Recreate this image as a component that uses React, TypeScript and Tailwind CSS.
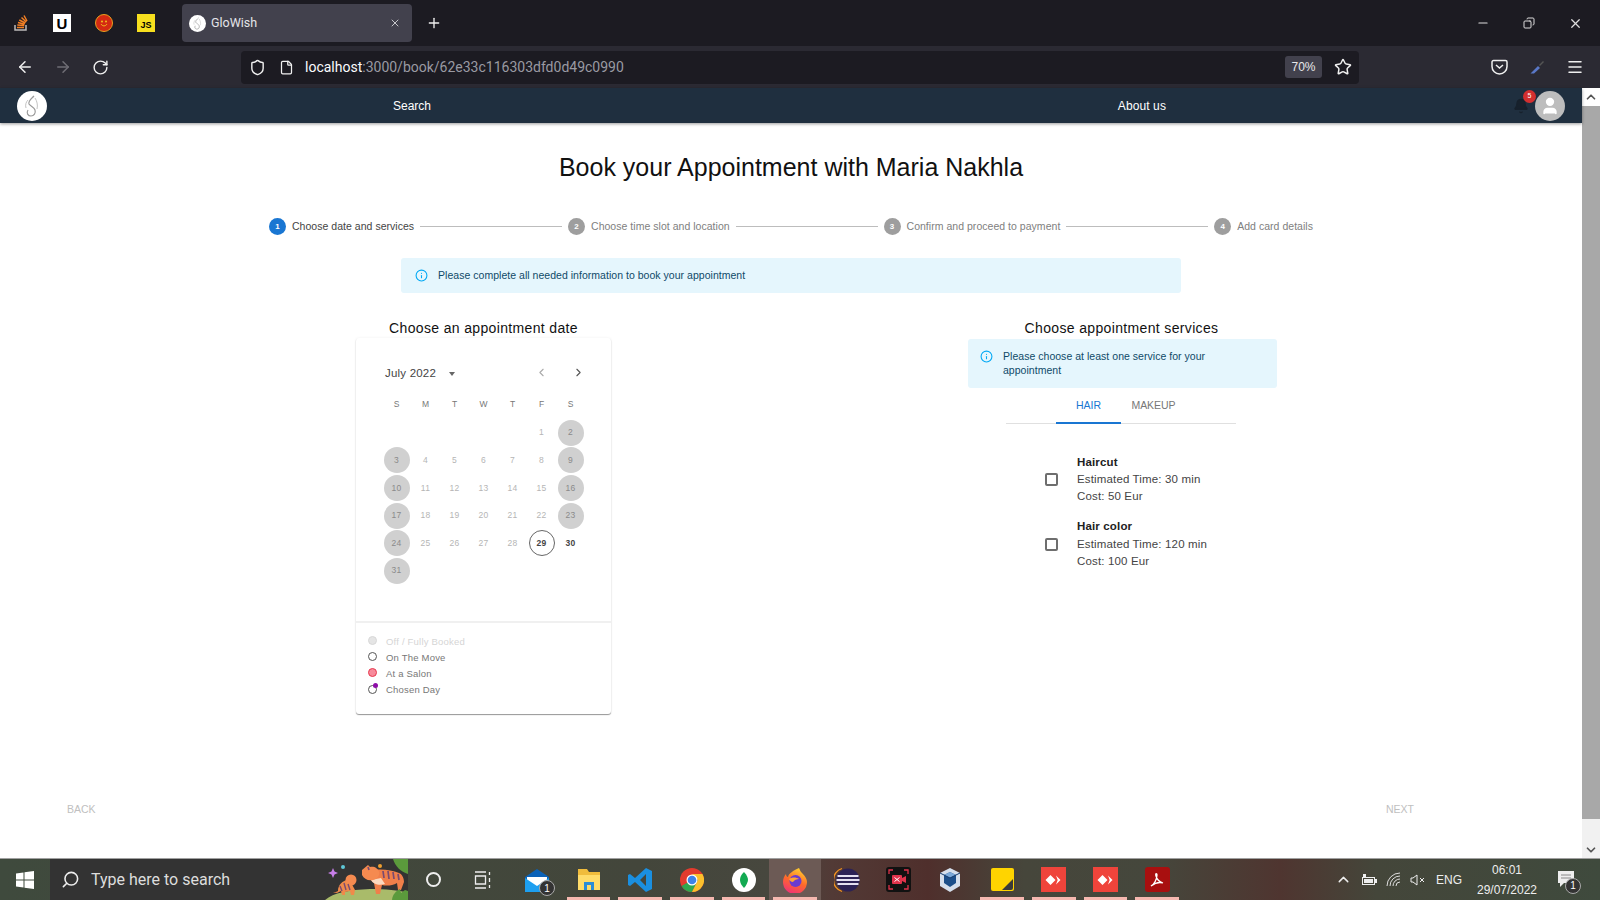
import React from "react";
import { ArrowLeft, ArrowRight, RotateCw, Shield, File, Star, Menu, Plus, X, Minus, Copy, ChevronUp, ChevronDown, ChevronLeft, ChevronRight, Info, Bell, User, Search as SearchIcon } from "lucide-react";

const FONT = "font-['Liberation_Sans',Arial,sans-serif]";

function Logo({ size }: { size: number }) {
  return (
    <svg width={size} height={size} viewBox="0 0 30 30">
      <circle cx="15" cy="15" r="15" fill="#fff" />
      <path d="M17 5c-3 3-6 5-5 8 1 2 5 3 6 6 1 3-1 6-4 6-3 0-5-3-3-6" fill="none" stroke="#9a9a9a" strokeWidth="1.2" />
      <path d="M18 7c2 3 3 7 2 11M11 9c-2 2-3 5-2 8" fill="none" stroke="#bbb" strokeWidth="0.9" />
    </svg>
  );
}

function Step({ n, label, active }: { n: number; label: string; active?: boolean }) {
  return (
    <div className="flex items-center gap-[6px] shrink-0">
      <div className={`w-[17px] h-[17px] rounded-full flex items-center justify-center text-white text-[8px] font-bold ${active ? "bg-[#1976d2]" : "bg-[#9e9e9e]"}`}>{n}</div>
      <span className={`text-[10.5px] tracking-[0.03px] ${active ? "text-[#444]" : "text-[#808080]"}`}>{label}</span>
    </div>
  );
}

const Line = () => <div className="flex-1 h-px bg-[#bdbdbd] mx-[6px]" />;

const weeks: (number | null)[][] = [
  [null, null, null, null, null, 1, 2],
  [3, 4, 5, 6, 7, 8, 9],
  [10, 11, 12, 13, 14, 15, 16],
  [17, 18, 19, 20, 21, 22, 23],
  [24, 25, 26, 27, 28, 29, 30],
  [31, null, null, null, null, null, null],
];

function Day({ d, col }: { d: number | null; col: number }) {
  if (d === null) return <div className="w-[26px] h-[26px]" />;
  const off = col === 0 || col === 6;
  const today = d === 29;
  const open = d === 30;
  let cls = "text-[#b5b5b5]";
  if (off && !open) cls = "bg-[#d0d0d0] text-[#8a8a8a]";
  if (today) cls = "border border-[#666] text-[#444] font-bold";
  if (open) cls = "text-[#444] font-bold";
  return <div className={`w-[26px] h-[26px] rounded-full flex items-center justify-center text-[8.5px] tracking-[0.3px] ${cls}`}>{d}</div>;
}

function Legend({ label, dot, muted }: { label: string; dot: React.ReactNode; muted?: boolean }) {
  return (
    <div className="flex items-center gap-[8px] h-[16px]">
      <div className="w-[10px] h-[10px] relative -mt-[2px]">{dot}</div>
      <span className={`text-[9.5px] tracking-[0.2px] ${muted ? "text-[#d5d5d5]" : "text-[#777]"}`}>{label}</span>
    </div>
  );
}

function Service({ name, time, cost }: { name: string; time: string; cost: string }) {
  return (
    <div className="flex items-center">
      <div className="w-[13px] h-[13px] border-2 border-[#6e6e6e] rounded-[2px] mr-[19px] shrink-0" />
      <div className="text-[11.5px] leading-[17.2px] text-[#444] tracking-[0.15px]">
        <div className="font-bold text-[#222]">{name}</div>
        <div>{time}</div>
        <div>{cost}</div>
      </div>
    </div>
  );
}

function Tile({ bg, children }: { bg: string; children?: React.ReactNode }) {
  return <div className={`w-[25px] h-[25px] flex items-center justify-center ${bg}`}>{children}</div>;
}

function TaskIcon({ children, active, running }: { children: React.ReactNode; active?: boolean; running?: boolean }) {
  return (
    <div className={`relative w-[51.7px] h-full flex items-center justify-center ${active ? "bg-[#6c5a55]" : ""}`}>
      {children}
      {running && <div className="absolute bottom-0 left-[4px] right-[4px] h-[3px] bg-[#f5b8b0]" />}
    </div>
  );
}

function Count({ className }: { className: string }) {
  return <div className={`absolute w-[16px] h-[16px] rounded-full bg-[#333] border border-[#aaa] text-white text-[10px] flex items-center justify-center ${className}`}>1</div>;
}

const AnyDesk = () => (
  <Tile bg="bg-[#ef443b]">
    <svg width="17" height="12" viewBox="0 0 17 12" fill="#fff"><path d="M5.500 1l5 5-5 5-5-5zM11 1.500l4.500 4.500L11 10.500l1.700-4.500z" /></svg>
  </Tile>
);

export default function App() {
  return (
    <div className={`${FONT} w-[1600px] h-[900px] overflow-hidden flex flex-col bg-white`}>
      {/* tab strip */}
      <div className="h-[46px] bg-[#1c1b22] flex items-center shrink-0">
        <div className="flex items-center w-[182px] pl-[13px] gap-[24px]">
          <svg width="16" height="18" viewBox="0 0 16 18">
            <path d="M2 11v5h11v-5" fill="none" stroke="#bcbbbb" strokeWidth="1.5" />
            <path d="M4 13.5h7M4.3 11l7 .6M5 8.500l6.600 1.800M6.300 6l6 3M8.500 3.500l4.800 4.500M11 1.500l3 5.500" stroke="#f48024" strokeWidth="1.5" />
          </svg>
          <div className="w-[18px] h-[18px] bg-white flex items-center justify-center">
            <span className="text-black font-bold text-[15px] leading-none">U</span>
          </div>
          <div className="w-[18px] h-[18px] rounded-full bg-[#d42a12] border border-[#e8a020] flex items-center justify-center">
            <svg width="12" height="12" viewBox="0 0 12 12"><circle cx="4" cy="4.500" r="1" fill="#f0c020" /><circle cx="8" cy="4.500" r="1" fill="#f0c020" /><path d="M3 7c1.500 2.500 4.500 2.500 6 0" stroke="#f0c020" fill="none" /></svg>
          </div>
          <div className="w-[18px] h-[18px] bg-[#f7df1e] flex items-end justify-center text-[9px] font-bold text-black leading-[13px]">JS</div>
        </div>
        <div className="w-[230px] h-[38px] bg-[#42414d] rounded-[4px] flex items-center pl-[7px] pr-[11px] gap-[5px]">
          <Logo size={17} />
          <span className="text-[12.5px] text-[#e4e4e8] flex-1 font-['Roboto',sans-serif] mt-[1px]">GloWish</span>
          <X size={12} className="text-[#c8c8cc]" />
        </div>
        <Plus size={16} className="text-[#f0f0f0] ml-[14px]" />
        <div className="flex-1" />
        <div className="flex items-center gap-[33px] pr-[17px]">
          <Minus size={14} className="text-[#ddd] -ml-[2px]" />
          <Copy size={12} className="text-[#ddd] -scale-x-100" />
          <X size={15} className="text-[#ddd]" />
        </div>
      </div>
      {/* toolbar */}
      <div className="h-[42px] bg-[#2b2a33] flex items-center shrink-0">
        <div className="flex items-center w-[241px] pl-[16px] gap-[20px] shrink-0">
          <ArrowLeft size={18} className="text-[#f0f0f0]" />
          <ArrowRight size={18} className="text-[#6f6e75]" />
          <RotateCw size={17} className="text-[#f0f0f0]" />
        </div>
        <div className="w-[1118px] h-[33px] bg-[#1c1b22] rounded-[4px] flex items-center pl-[8px] pr-[5px]">
          <Shield size={17} className="text-[#f0f0f0]" />
          <File size={15} className="text-[#f0f0f0] ml-[13px]" />
          <span className="ml-[11px] mt-[1px] text-[14px] font-['Roboto',sans-serif] text-[#fbfbfe]">localhost<span className="text-[#9a9aa2]">:3000/book/62e33c116303dfd0d49c0990</span></span>
          <div className="flex-1" />
          <div className="w-[37px] h-[22px] bg-[#42414d] rounded-[3px] text-[12px] text-[#e8e8ea] flex items-center justify-center">70%</div>
          <Star size={18} className="text-[#f0f0f0] ml-[12px]" />
          <div className="w-[2px]" />
        </div>
        <div className="flex-1 flex items-center justify-end gap-[21px] pr-[16px]">
          <svg width="17" height="16" viewBox="0 0 17 16"><path d="M2.500 1.500h12a1.500 1.500 0 0 1 1.500 1.500v4.500a7.500 7.500 0 0 1-15 0V3a1.500 1.500 0 0 1 1.500-1.500z" fill="none" stroke="#f0f0f0" strokeWidth="1.500" /><path d="M5 6l3.500 3L12 6" fill="none" stroke="#f0f0f0" strokeWidth="1.500" /></svg>
          <svg width="16" height="16" viewBox="0 0 16 16"><path d="M1.500 14.500L9 7l2 2-6 5.500z" fill="#5a78c8" /><path d="M10 6l4-4 1 1-4 4z" fill="#555" /></svg>
          <Menu size={18} className="text-[#f0f0f0]" />
        </div>
      </div>
      {/* page */}
      <div className="flex-1 flex min-h-0">
        <div className="flex-1 flex flex-col min-w-0">
          <header className="h-[35px] bg-[#1f2f3f] shadow-[0_1px_3px_rgba(0,0,0,0.4)] flex items-center relative shrink-0">
            <div className="pl-[17px]"><Logo size={30} /></div>
            <div className="w-[384px] text-right text-white text-[12px]">Search</div>
            <div className="w-[735px] text-right text-white text-[12px] tracking-[0.1px]">About us</div>
            <div className="flex-1" />
            <div className="relative flex items-center pr-[17px]">
              <Bell size={16} className="text-[#17212c] mr-[6px]" fill="#17212c" />
              <div className="absolute left-[10px] top-[-1px] w-[13px] h-[13px] rounded-full bg-[#d32f2f] text-white text-[7px] flex items-center justify-center">5</div>
              <div className="w-[30px] h-[30px] rounded-full bg-[#bdbdbd] flex items-center justify-center">
                <User size={20} className="text-white" fill="#fff" />
              </div>
            </div>
          </header>
          <main className="flex-1 flex flex-col min-h-0">
            <h1 className="text-center text-[25px] leading-[30px] text-[#111] mt-[29px]">Book your Appointment with Maria Nakhla</h1>
            <div className="flex items-center ml-[269px] mr-[269px] mt-[36px]">
              <Step n={1} label="Choose date and services" active />
              <Line />
              <Step n={2} label="Choose time slot and location" />
              <Line />
              <Step n={3} label="Confirm and proceed to payment" />
              <Line />
              <Step n={4} label="Add card details" />
            </div>
            <div className="ml-[401px] w-[780px] h-[35px] mt-[23px] bg-[#e5f6fd] rounded-[3px] flex items-center pl-[14px] gap-[10px] shrink-0">
              <Info size={13} className="text-[#03a9f4]" />
              <span className="text-[10.5px] text-[#0f4a68] tracking-[0.03px]">Please complete all needed information to book your appointment</span>
            </div>
            <div className="flex items-start ml-[356px] mt-[26px]">
              <section className="w-[255px]">
                <h2 className="text-center text-[14px] leading-[18px] text-[#111] tracking-[0.35px] mb-[1px]">Choose an appointment date</h2>
                <div className="rounded-[3px] shadow-[0_1px_1px_rgba(0,0,0,0.4),0_0_3px_rgba(0,0,0,0.06)] bg-white">
                  <div className="h-[285px] border-b-2 border-[#f0f0f0] pt-[27px]">
                    <div className="flex items-center pl-[29px] pr-[26px] h-[18px]">
                      <span className="text-[11.5px] text-[#444] tracking-[0.2px]">July 2022</span>
                      <div className="w-0 h-0 border-l-[3.5px] border-r-[3.5px] border-t-[4px] border-l-transparent border-r-transparent border-t-[#666] ml-[13px]" />
                      <div className="flex-1" />
                      <ChevronLeft size={13} className="text-[#aaa] mb-[4px]" />
                      <ChevronRight size={13} className="text-[#555] ml-[24px] mb-[4px]" />
                    </div>
                    <div className="grid grid-cols-[repeat(7,29px)] pl-[26px] mt-[13px] justify-items-center">
                      {["S", "M", "T", "W", "T", "F", "S"].map((s, i) => (
                        <div key={i} className="text-[8.5px] text-[#777] h-[16px] leading-[16px]">{s}</div>
                      ))}
                    </div>
                    <div className="grid grid-cols-[repeat(7,29px)] auto-rows-[27.6px] pl-[26px] mt-[7px] justify-items-center items-center">
                      {weeks.flatMap((w, r) => w.map((d, c) => <Day key={`${r}-${c}`} d={d} col={c} />))}
                    </div>
                  </div>
                  <div className="pl-[12px] pt-[11px] h-[91px]">
                    <Legend muted label="Off / Fully Booked" dot={<div className="w-[9px] h-[9px] rounded-full bg-[#e5e5e5] border border-[#d8d8d8]" />} />
                    <Legend label="On The Move" dot={<div className="w-[9px] h-[9px] rounded-full border border-[#555]" />} />
                    <Legend label="At a Salon" dot={<div className="w-[9px] h-[9px] rounded-full bg-[#f78b9b] border border-[#e8384f]" />} />
                    <Legend label="Chosen Day" dot={<><div className="w-[9px] h-[9px] rounded-full border border-[#555] mt-[1px]" /><div className="absolute left-[5px] -top-[1px] w-[5px] h-[5px] rounded-full bg-[#8e0ea8]" /></>} />
                  </div>
                </div>
              </section>
              <section className="w-[309px] ml-[357px]">
                <h2 className="text-center text-[14px] leading-[18px] text-[#111] tracking-[0.35px] mb-[2px] pr-[2px]">Choose appointment services</h2>
                <div className="h-[49px] bg-[#e5f6fd] rounded-[3px] flex items-start pl-[12px] pr-[24px] pt-[10px] gap-[10px]">
                  <Info size={13} className="text-[#03a9f4] shrink-0 mt-[1px]" />
                  <span className="text-[10.5px] leading-[14px] text-[#0f4a68] tracking-[0.03px]">Please choose at least one service for your appointment</span>
                </div>
                <div className="ml-[38px] w-[230px] h-[36px] border-b border-[#e0e0e0] flex">
                  <div className="ml-[50px] w-[65px] h-[36px] border-b-2 border-[#1976d2] text-[#1976d2] text-[10.5px] flex items-center justify-center pt-[2px]">HAIR</div>
                  <div className="w-[65px] h-[35px] text-[#777] text-[10.5px] tracking-[-0.05px] flex items-center justify-center pt-[1px]">MAKEUP</div>
                </div>
                <div className="ml-[77px] mt-[30px] flex flex-col gap-[12.7px]">
                  <Service name="Haircut" time="Estimated Time: 30 min" cost="Cost: 50 Eur" />
                  <Service name="Hair color" time="Estimated Time: 120 min" cost="Cost: 100 Eur" />
                </div>
              </section>
            </div>
            <div className="flex-1" />
            <div className="flex justify-between pl-[67px] pr-[168px] pb-[40px] text-[10.5px] text-[#c0c0c0]">
              <span>BACK</span>
              <span>NEXT</span>
            </div>
          </main>
        </div>
        {/* scrollbar */}
        <div className="w-[18px] bg-[#f1f1f1] flex flex-col items-center shrink-0">
          <div className="h-[18px] bg-white flex items-center justify-center w-full"><ChevronUp size={14} strokeWidth={3} className="text-[#555]" /></div>
          <div className="h-[713px] w-full bg-[#a8a8a8]" />
          <div className="flex-1" />
          <div className="h-[17px] flex items-center justify-center w-full"><ChevronDown size={14} strokeWidth={3} className="text-[#555]" /></div>
        </div>
      </div>
      {/* taskbar */}
      <div className="h-[42px] shrink-0 flex items-center bg-[linear-gradient(90deg,#3f4a3d_0%,#43463b_40%,#47473e_48%,#523a36_52%,#4f2f2c_58%,#46463b_64%,#45473c_72%,#4f3530_80%,#44463a_86%,#3f4a3d_100%)] border-t border-[#a0a0a0]">
        <div className="w-[50px] flex justify-center">
          <svg width="18" height="18" viewBox="0 0 18 18" fill="#fff"><path d="M0 2.500l7.500-1v7H0zM8.500 1.300L18 0v8.500H8.500zM0 9.500h7.500v7l-7.500-1zM8.500 9.500H18V18l-9.500-1.300z" /></svg>
        </div>
        <div className="w-[358px] h-full bg-[#333] flex items-center pl-[11px] relative overflow-hidden">
          <SearchIcon size={19} className="text-[#eee] -scale-x-100" />
          <span className="ml-[11px] text-[16px] text-[#ddd] font-['Roboto',sans-serif]">Type here to search</span>
          <svg className="absolute right-0 top-0" width="84" height="42" viewBox="0 0 84 42">
            <path d="M0 42C8 34 24 31 46 30c16 0 28 1 38 4v8z" fill="#a9bb6a" />
            <path d="M47 12c8-3 20-1 28 2 3 1 5 5 5 9l-3 8h-3l-1-7c-5 3-11 3-15 2l-2 9h-4l-2-11c-3-2-5-6-3-12z" fill="#f07f4a" />
            <path d="M47 21c2 4 8 6 14 4l-4-6c-3 1-7 1-10 2z" fill="#fbd9c0" />
            <path d="M38 11l6-5 2 2c4-1 8 1 9 5 1 4-2 7-6 8-5 1-9-1-11-5 0-2 0-3 0-5z" fill="#f58a50" />
            <path d="M59 12l1 7M64 12l1 8M69 13l1 7M74 15l1 6M44 8l1 3" stroke="#7a4a70" strokeWidth="1.700" fill="none" />
            <path d="M14 32c0-6 4-10 11-12l6 11-1 5h-3l-1-4-5 1v3h-3l-1-4-4 2c-2 0-3-1-4-1 2 0 4 0 5-1z" fill="#f08a4a" />
            <circle cx="27" cy="21" r="5.500" fill="#f58a50" />
            <path d="M16 27l2 5M20 24l2 7M24 25l2 6" stroke="#7a4a70" strokeWidth="1.400" fill="none" />
            <path d="M9 9l1.500 3.500L14 14l-3.500 1.500L9 19l-1.500-3.500L4 14l3.500-1.500z" fill="#c77ee8" />
            <circle cx="19" cy="8" r="2" fill="#5fc8d8" />
            <circle cx="56" cy="7" r="2" fill="#f0a030" />
            <path d="M69 0h15v15c-7-2-13-8-15-15zM68 42c0-6 4-10 8-12l1 4 4-3 3 1v10z" fill="#5b9a3c" />
          </svg>
        </div>
        <div className="w-[50px] flex justify-center"><div className="w-[15px] h-[15px] rounded-full border-2 border-[#eee]" /></div>
        <div className="w-[50px] flex justify-center">
          <svg width="18" height="18" viewBox="0 0 18 18" fill="none" stroke="#eee" strokeWidth="1.300"><path d="M1 1h11M1 17h11M1.500 5h10v8h-10zM15.500 1v3M15.500 7v4M15.500 14v3" /></svg>
        </div>
        <div className="flex h-full ml-[3px]">
          <TaskIcon>
            <svg width="26" height="24" viewBox="0 0 26 24"><path d="M1 9L13 1l12 8v15H1z" fill="#0a62b8" /><path d="M3 9h20v5l-10 7-10-7z" fill="#fff" /><path d="M1 10l12 8 12-8v14H1z" fill="#1d9ff0" /></svg>
            <Count className="left-[28px] top-[21px]" />
          </TaskIcon>
          <TaskIcon running>
            <svg width="24" height="22" viewBox="0 0 24 22"><path d="M1 0h9l2 3h11v18H1z" fill="#f0bc3c" /><rect x="1" y="6" width="22" height="15" fill="#ffdc6a" /><rect x="7" y="13" width="10" height="8" fill="#2a8dd8" /><rect x="10" y="16" width="4" height="5" fill="#ffdc6a" /></svg>
          </TaskIcon>
          <TaskIcon running>
            <svg width="26" height="26" viewBox="0 0 26 26"><path d="M19 1l6 3v18l-6 3L8 15l-5 4-2-1V8l2-1 5 4zM19 7l-6 6 6 6z" fill="#1a8fe0" fillRule="evenodd" /></svg>
          </TaskIcon>
          <TaskIcon running>
            <svg width="24" height="24" viewBox="0 0 24 24">
              <circle cx="12" cy="12" r="12" fill="#e33b2e" />
              <path d="M12 12L1.600 18A12 12 0 0 0 12 24l6-12z" fill="#2fa84f" />
              <path d="M12 24A12 12 0 0 0 22.400 6H12l6 6z" fill="#fbc02d" />
              <circle cx="12" cy="12" r="5.500" fill="#fff" /><circle cx="12" cy="12" r="4.300" fill="#3f83e8" />
            </svg>
          </TaskIcon>
          <TaskIcon running>
            <svg width="24" height="24" viewBox="0 0 24 24"><circle cx="12" cy="12" r="12" fill="#fff" /><path d="M12 4c3 3 4 6 4 8s-2 6-4 8c-2-2-4-5-4-8s1-5 4-8z" fill="#13aa52" /></svg>
          </TaskIcon>
          <TaskIcon active running>
            <svg width="26" height="26" viewBox="0 0 26 26">
              <defs><linearGradient id="fx" x1="0.700" y1="0" x2="0.300" y2="1"><stop offset="0" stopColor="#ffd12e" /><stop offset="0.500" stopColor="#ff6a2a" /><stop offset="1" stopColor="#f0307a" /></linearGradient></defs>
              <path d="M17 1c1 2 1 3 3 5 4 4 5 7 5 9a12 12 0 0 1-24 0c0-3 1-6 3-8 0 2 1 3 2 3 1-4 5-6 11-9z" fill="url(#fx)" />
              <circle cx="13.500" cy="14" r="6" fill="#6a3bd0" />
              <path d="M7 12c3-2 7-2 10 0-2 0-5 1-6 3-2 0-3-1-4-3z" fill="#ffa436" />
            </svg>
          </TaskIcon>
          <TaskIcon>
            <svg width="26" height="26" viewBox="0 0 26 26"><circle cx="14" cy="13" r="11.500" fill="#2c2255" /><path d="M3.500 9h21M2.500 13h23M3.500 17h21" stroke="#e4e0f0" strokeWidth="2" /><path d="M8 1.500A12 12 0 0 0 8 24.500" fill="none" stroke="#f7941e" strokeWidth="1.300" /></svg>
          </TaskIcon>
          <TaskIcon>
            <Tile bg="bg-[#111] rounded-[3px]">
              <svg width="23" height="23" viewBox="0 0 23 23" fill="none">
                <path d="M2 6V2h4M17 2h4v4M21 17v4h-4M6 21H2v-4" stroke="#e0334c" strokeWidth="1.300" />
                <rect x="5" y="7" width="10" height="9" rx="1" fill="#e0334c" /><path d="M15 10l4-2v7l-4-2z" fill="#e0334c" /><path d="M7.500 9.500l5 4M12.500 9.500l-5 4" stroke="#fff" />
              </svg>
            </Tile>
          </TaskIcon>
          <TaskIcon>
            <svg width="24" height="26" viewBox="0 0 24 26"><path d="M12 1l10 5v13l-10 6-10-6V6z" fill="#d5dfec" /><path d="M12 5l6 3v8l-6 4-6-4V8z" fill="#1c4f8a" /><path d="M12 5l6 3-6 3-6-3z" fill="#7aa8d8" /><path d="M2 6l10 5 10-5" stroke="#12386a" fill="none" /></svg>
          </TaskIcon>
          <TaskIcon running>
            <svg width="23" height="23" viewBox="0 0 23 23"><rect width="23" height="23" rx="2" fill="#ffd400" /><path d="M22 11v9a2 2 0 0 1-2 2h-9z" fill="#3a3a3a" /></svg>
          </TaskIcon>
          <TaskIcon running><AnyDesk /></TaskIcon>
          <TaskIcon running><AnyDesk /></TaskIcon>
          <TaskIcon running>
            <Tile bg="bg-[#a80f0f] rounded-[3px]"><svg width="16" height="16" viewBox="0 0 16 16" fill="none" stroke="#fff" strokeWidth="1.300"><path d="M2 14c3-1 6-7 6-11 0-2-2-2-1 1 1 4 4 6 7 7-3-1-8 0-12 3z" /></svg></Tile>
          </TaskIcon>
        </div>
        <div className="flex-1" />
        <div className="flex items-center text-[#eee] pr-[22px]">
          <ChevronUp size={17} />
          <svg className="ml-[9px]" width="16" height="12" viewBox="0 0 16 12"><rect x="1.500" y="3.500" width="12" height="7" fill="none" stroke="#eee" /><rect x="3" y="5" width="9" height="4" fill="#eee" /><rect x="2" y="0" width="3" height="3" fill="#eee" /><rect x="14" y="5" width="2" height="4" fill="#eee" /></svg>
          <svg className="ml-[9px]" width="15" height="15" viewBox="0 0 15 15" fill="none" stroke="#ddd"><path d="M1 14A13 13 0 0 1 14 1M4 14A10 10 0 0 1 14 4M7 14a7 7 0 0 1 7-7M10 14a4 4 0 0 1 4-4" /></svg>
          <svg className="ml-[9px]" width="16" height="14" viewBox="0 0 16 14" fill="none" stroke="#eee"><path d="M1 5h2l4-3v10l-4-3H1zM10 5l4 4M14 5l-4 4" /></svg>
          <span className="ml-[10px] text-[12px]">ENG</span>
          <div className="ml-[13px] w-[64px] text-center text-[12px] leading-[20px]"><div>06:01</div><div>29/07/2022</div></div>
          <div className="relative ml-[18px] mr-[1px] w-[20px] h-[20px]">
            <svg width="18" height="18" viewBox="0 0 18 18"><path d="M1 1h16v12H7l-4 4v-4H1z" fill="#eee" /><path d="M4 5h10M4 8h10" stroke="#888" /></svg>
            <Count className="left-[8px] top-[8px]" />
          </div>
        </div>
      </div>
    </div>
  );
}
